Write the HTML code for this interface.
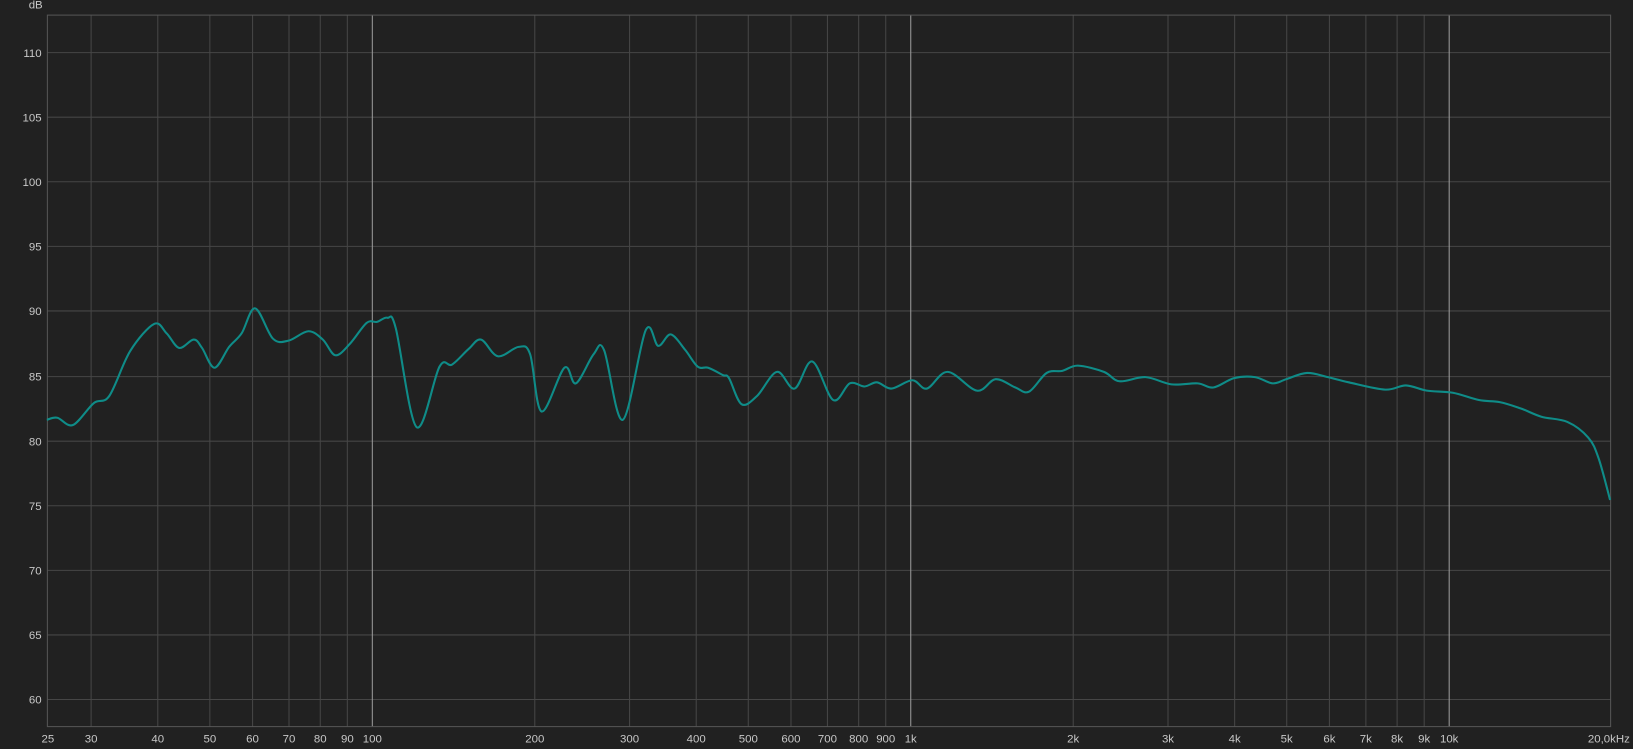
<!DOCTYPE html>
<html><head><meta charset="utf-8">
<style>
html,body{margin:0;padding:0;background:#212121;overflow:hidden}
svg{display:block}
text{font-family:"Liberation Sans",sans-serif;font-size:11px;fill:#c8c8c8}
</style></head>
<body>
<svg id="s" width="1633" height="749" viewBox="0 0 1568 719" preserveAspectRatio="none" xmlns="http://www.w3.org/2000/svg">
<rect width="1568" height="719" fill="#212121"/>
<g id="grid"></g>
<path id="curve" fill="none" stroke="#0f8c88" stroke-width="2" stroke-linejoin="round"/>
<g id="labels"></g>
</svg>
<script>
var NS="http://www.w3.org/2000/svg";
var g=document.getElementById('grid'),L=document.getElementById('labels');
function fx(f){return 357+517*Math.log10(f/100);}
function line(x1,y1,x2,y2,c){var l=document.createElementNS(NS,'line');l.setAttribute('x1',x1);l.setAttribute('y1',y1);l.setAttribute('x2',x2);l.setAttribute('y2',y2);l.setAttribute('stroke',c);l.setAttribute('stroke-width',1);g.appendChild(l);}
function txt(x,y,s,a){var t=document.createElementNS(NS,'text');t.setAttribute('x',x);t.setAttribute('y',y);t.setAttribute('text-anchor',a);t.textContent=s;L.appendChild(t);}
var T=14.5,B=697.5,Lx=45.5,R=1546.5;
for(var v=110;v>=60;v-=5){var y=Math.round(50+(110-v)*12.42)+0.5;line(Lx,y,R,y,'#464646');txt(40,y+4,String(v),'end');}
var fs=[30,40,50,60,70,80,90,100,200,300,400,500,600,700,800,900,1000,2000,3000,4000,5000,6000,7000,8000,9000,10000];
fs.forEach(function(f){var x=Math.round(fx(f))+0.5;var maj=(f==100||f==1000||f==10000);line(x,T,x,B,maj?'#9a9a9a':'#464646');
var s=f>=1000?(f/1000)+'k':String(f);txt(x,713,s,'middle');});
var r=document.createElementNS(NS,'rect');r.setAttribute('x',Lx);r.setAttribute('y',T);r.setAttribute('width',R-Lx);r.setAttribute('height',B-T);r.setAttribute('fill','none');r.setAttribute('stroke','#555');g.appendChild(r);
txt(46,713,'25','middle');txt(1565,713,'20,0kHz','end');txt(41,8,'dB','end');
var p=[[45,403],[55,401],[70,408],[90,387],[105,380],[125,337],[148,311],[160,320],[172,334],[186,326],[194,334],[206,353],[220,333],[232,320],[245,296],[262,325],[277,327],[296,318],[310,326],[322,341],[336,330],[352,310],[362,309],[372,305],[380,315],[400,410],[422,352],[434,350],[450,335],[462,326],[478,342],[498,333],[509,340],[520,395],[542,353],[553,368],[570,340],[580,336],[598,403],[620,317],[632,332],[644,321],[658,336],[670,352],[680,353],[694,360],[700,363],[712,388],[727,380],[746,357],[763,373],[780,347],[800,384],[816,368],[830,371],[842,367],[856,373],[876,365],[890,373],[910,357],[938,375],[956,364],[975,372],[988,376],[1005,358],[1020,356],[1035,351],[1060,357],[1075,366],[1100,362],[1125,369],[1150,368],[1165,372],[1185,363],[1205,362],[1222,368],[1235,364],[1255,358],[1275,362],[1295,367],[1330,374],[1350,370],[1370,375],[1395,377],[1420,384],[1440,386],[1460,392],[1480,400],[1505,405],[1525,420],[1535,440],[1546,480]];
var d='M'+p[0][0]+','+p[0][1];
for(var i=0;i<p.length-1;i++){var p0=p[i-1]||p[i],p1=p[i],p2=p[i+1],p3=p[i+2]||p2;
var c1x=p1[0]+(p2[0]-p0[0])/6,c1y=p1[1]+(p2[1]-p0[1])/6,c2x=p2[0]-(p3[0]-p1[0])/6,c2y=p2[1]-(p3[1]-p1[1])/6;
d+=' C'+c1x.toFixed(1)+','+c1y.toFixed(1)+' '+c2x.toFixed(1)+','+c2y.toFixed(1)+' '+p2[0]+','+p2[1];}
document.getElementById('curve').setAttribute('d',d);
</script>
</body></html>
